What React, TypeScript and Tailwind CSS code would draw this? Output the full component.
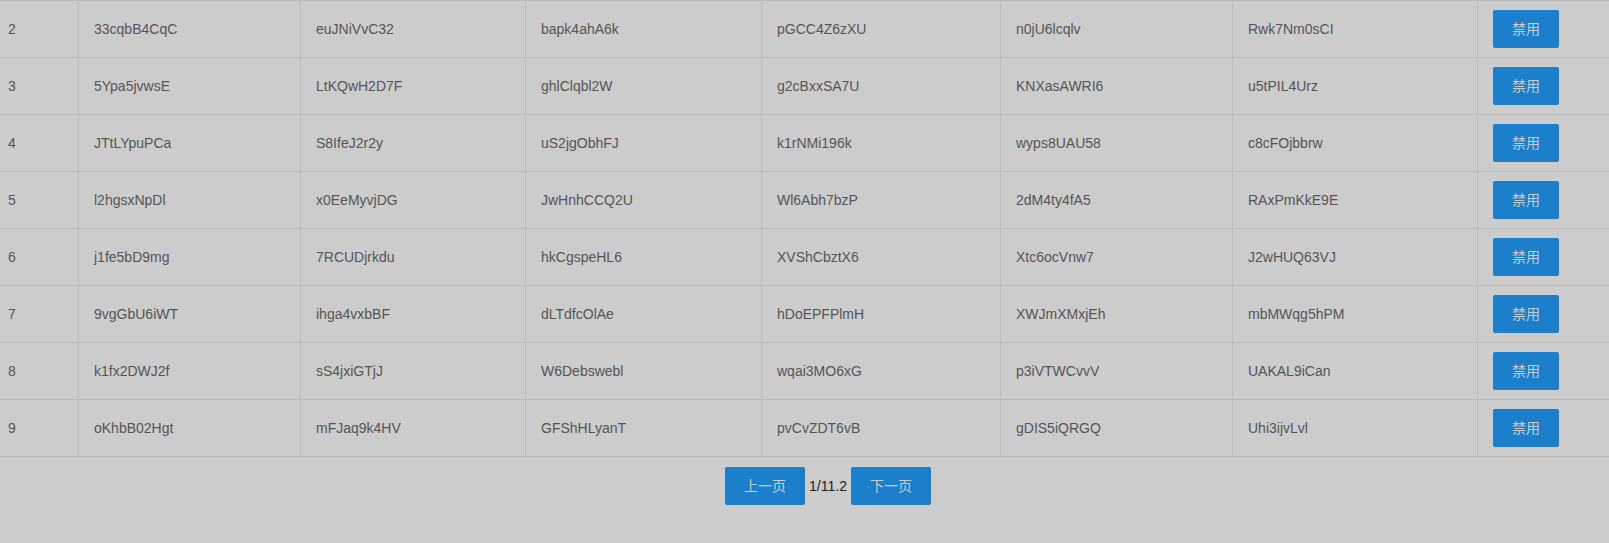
const rows = [
  ['2', '33cqbB4CqC', 'euJNiVvC32', 'bapk4ahA6k', 'pGCC4Z6zXU', 'n0jU6lcqlv', 'Rwk7Nm0sCI'],
  ['3', '5Ypa5jvwsE', 'LtKQwH2D7F', 'ghlClqbl2W', 'g2cBxxSA7U', 'KNXasAWRI6', 'u5tPIL4Urz'],
  ['4', 'JTtLYpuPCa', 'S8IfeJ2r2y', 'uS2jgObhFJ', 'k1rNMi196k', 'wyps8UAU58', 'c8cFOjbbrw'],
  ['5', 'l2hgsxNpDl', 'x0EeMyvjDG', 'JwHnhCCQ2U', 'Wl6Abh7bzP', '2dM4ty4fA5', 'RAxPmKkE9E'],
  ['6', 'j1fe5bD9mg', '7RCUDjrkdu', 'hkCgspeHL6', 'XVShCbztX6', 'Xtc6ocVnw7', 'J2wHUQ63VJ'],
  ['7', '9vgGbU6iWT', 'ihga4vxbBF', 'dLTdfcOlAe', 'hDoEPFPlmH', 'XWJmXMxjEh', 'mbMWqg5hPM'],
  ['8', 'k1fx2DWJ2f', 'sS4jxiGTjJ', 'W6Debswebl', 'wqai3MO6xG', 'p3iVTWCvvV', 'UAKAL9iCan'],
  ['9', 'oKhbB02Hgt', 'mFJaq9k4HV', 'GFShHLyanT', 'pvCvZDT6vB', 'gDIS5iQRGQ', 'Uhi3ijvLvl'],
]

const font = "font-['Liberation_Sans','Noto_Sans_CJK_SC',sans-serif]"

export default function App() {
  return (
    <div className={`min-h-[543px] w-full bg-[#cccccc] text-[14px] ${font}`}>
      <div className="border-t border-[#bbbbbb]">
        {rows.map((r) => (
          <div
            key={r[0]}
            className="grid h-[57px] grid-cols-[78px_222px_225px_236px_239px_232px_245px_1fr] border-b border-[#bbbbbb] text-[#555555]"
          >
            <div className="flex items-center pl-2">{r[0]}</div>
            {r.slice(1).map((c, i) => (
              <div key={i} className="flex items-center border-l border-[#bbbbbb] px-[15px]">
                {c}
              </div>
            ))}
            <div className="flex items-center border-l border-[#bbbbbb] px-[15px]">
              <button className="h-[38px] w-[66px] rounded-[2px] bg-[#1b7fcc] text-[#cccccc]">
                禁用
              </button>
            </div>
          </div>
        ))}
      </div>
      <div className="flex items-center justify-center gap-1 pt-[10px] pl-[47px]">
        <button className="h-[38px] w-[80px] rounded-[2px] bg-[#1b7fcc] text-[#cccccc]">上一页</button>
        <span className="text-[#222222]">1/11.2</span>
        <button className="h-[38px] w-[80px] rounded-[2px] bg-[#1b7fcc] text-[#cccccc]">下一页</button>
      </div>
    </div>
  )
}
